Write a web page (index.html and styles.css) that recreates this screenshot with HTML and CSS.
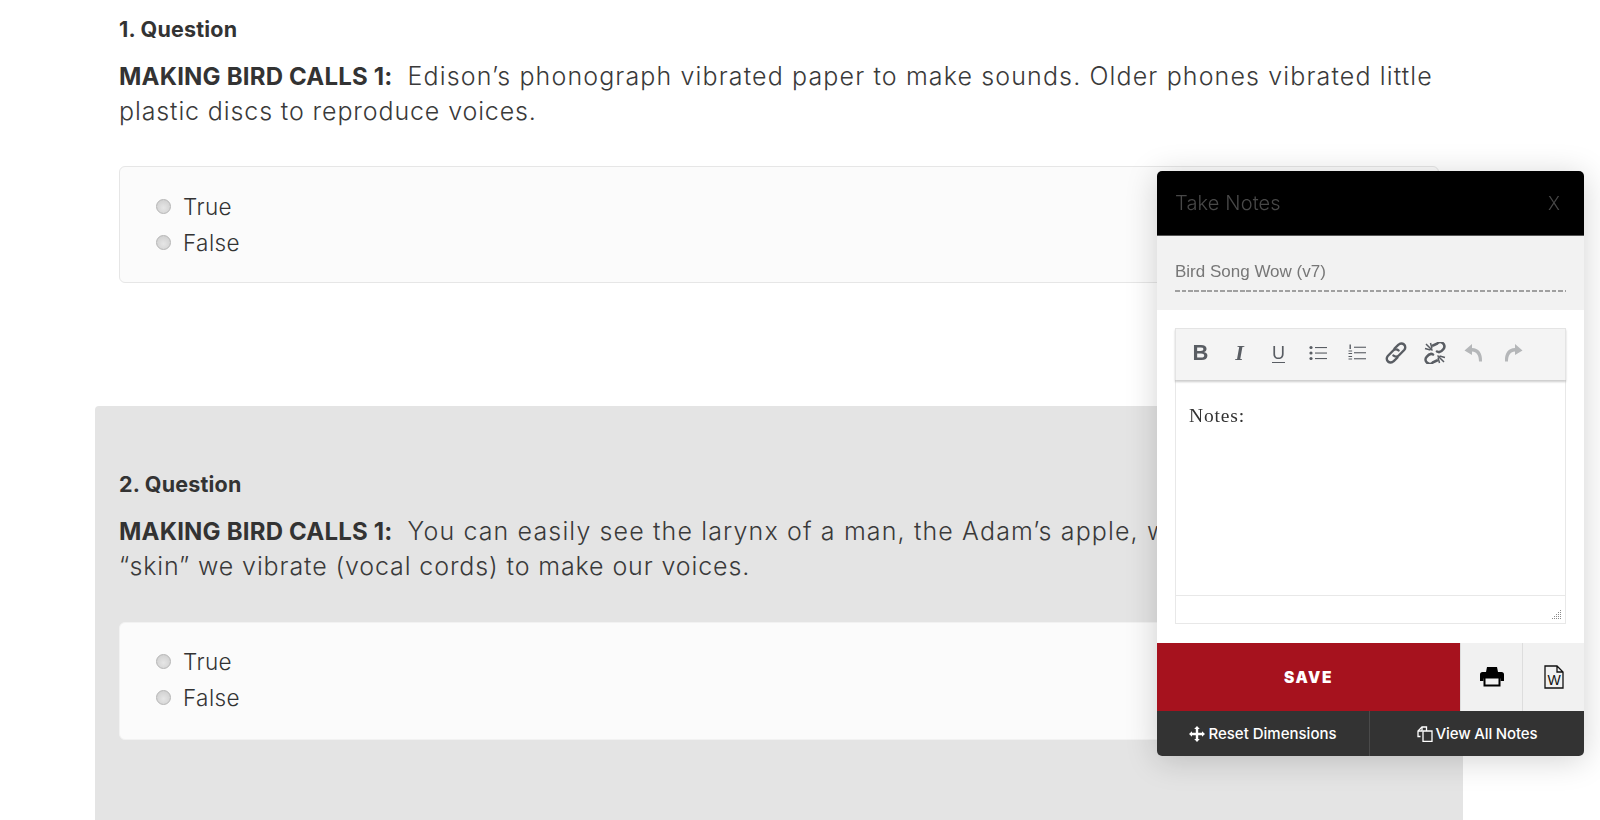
FILE: index.html
```html
<!DOCTYPE html>
<html lang="en">
<head>
<meta charset="utf-8">
<title>Take Notes</title>
<link rel="stylesheet" href="styles.css">
</head>
<body>
<main class="page">
  <section class="question first">
    <h3 class="q-title">1. Question</h3>
    <p class="q-text"><strong class="q-lead">MAKING BIRD CALLS 1:</strong><span class="q-body">Edison’s phonograph vibrated paper to make sounds. Older phones vibrated little<br><span class="q-wrap">plastic discs to reproduce voices.</span></span></p>
    <div class="answers">
      <label class="answer"><span class="radio"></span>True</label>
      <label class="answer"><span class="radio"></span>False</label>
    </div>
  </section>
  <section class="question active">
    <h3 class="q-title">2. Question</h3>
    <p class="q-text"><strong class="q-lead">MAKING BIRD CALLS 1:</strong><span class="q-body">You can easily see the larynx of a man, the Adam’s apple, which holds the<br><span class="q-wrap">“skin” we vibrate (vocal cords) to make our voices.</span></span></p>
    <div class="answers">
      <label class="answer"><span class="radio"></span>True</label>
      <label class="answer"><span class="radio"></span>False</label>
    </div>
  </section>
</main>

<aside class="notes">
  <header class="notes-head"><span>Take Notes</span><span class="notes-x">X</span></header>
  <div class="notes-name"><div class="notes-input">Bird Song Wow (v7)</div></div>
  <div class="notes-editor">
    <div class="toolbar">
      <span class="tool t-b">B</span>
      <span class="tool t-i">I</span>
      <span class="tool t-u">U</span>
      <span class="tool">
        <svg width="18" height="16" viewBox="0 0 18 16"><g fill="#595d63"><circle cx="2" cy="2.500" r="1.600"/><circle cx="2" cy="8" r="1.600"/><circle cx="2" cy="13.500" r="1.600"/><rect x="6" y="2" width="12" height="1.100"/><rect x="6" y="7.500" width="12" height="1.100"/><rect x="6" y="13" width="12" height="1.100"/></g></svg>
      </span>
      <span class="tool">
        <svg width="18" height="18" viewBox="0 0 18 18"><g fill="#595d63"><rect x="1.500" y="0.500" width="1.400" height="4.500"/><rect x="0.500" y="6.500" width="3.600" height="1"/><rect x="0.500" y="9" width="3.600" height="1"/><rect x="0.500" y="12" width="3.600" height="1"/><rect x="0.500" y="14.500" width="3.600" height="1"/><rect x="6" y="2.700" width="12" height="1.100"/><rect x="6" y="8.200" width="12" height="1.100"/><rect x="6" y="14.200" width="12" height="1.100"/></g></svg>
      </span>
      <span class="tool">
        <svg width="22" height="22" viewBox="0 0 22 22"><g fill="none" stroke="#595d63" stroke-width="2.400" stroke-linecap="round"><path d="M9.500 6.500 13.500 2.700a3.800 3.800 0 0 1 5.700 5.300L13.800 13.500a3.800 3.800 0 0 1-5.400 0"/><path d="M12.500 15.500 8.500 19.300a3.800 3.800 0 0 1-5.700-5.300L8.200 8.500a3.800 3.800 0 0 1 5.400 0"/></g></svg>
      </span>
      <span class="tool">
        <svg width="22" height="22" viewBox="0 0 22 22"><g fill="none" stroke="#595d63" stroke-width="2.600" stroke-linecap="round"><path d="M9 3.500 13 1.800a3.800 3.800 0 0 1 6.500 5.200C18 9 15.500 11 13 9.500"/><path d="M13 18.500 9 20.200a3.800 3.800 0 0 1-6.500-5.200C4 13 6.500 11 9 12.500"/></g><g stroke="#595d63" stroke-width="1.500"><path d="M2 2 8.500 8.500M6.500 1 8 6.500M1 6.500 6.500 8M20 20l-6.500-6.500M15.500 21 14 15.500M21 15.500 15.500 14"/></g></svg>
      </span>
      <span class="tool">
        <svg width="20" height="20" viewBox="0 0 20 20"><path fill="#b5b7b9" d="M8 1 0.500 7.500 8 12V8.500c4.500.3 7 3.500 7 10h3c.5-9-3.500-13-10-13.500z"/></svg>
      </span>
      <span class="tool">
        <svg width="20" height="20" viewBox="0 0 20 20"><path fill="#b5b7b9" d="M12 1l7.500 6.500L12 12V8.500c-4.500.3-7 3.500-7 10H2c-.5-9 3.500-13 10-13.500z"/></svg>
      </span>
    </div>
    <div class="editor-body">Notes:</div>
    <div class="editor-status">
      <svg class="grip" width="12" height="12" viewBox="0 0 12 12"><g fill="#8b8b8b"><rect x="10" y="1" width="1" height="1"/><rect x="10" y="3" width="1" height="1"/><rect x="8" y="3" width="1" height="1"/><rect x="10" y="5" width="1" height="1"/><rect x="8" y="5" width="1" height="1"/><rect x="6" y="5" width="1" height="1"/><rect x="10" y="7" width="1" height="1"/><rect x="8" y="7" width="1" height="1"/><rect x="6" y="7" width="1" height="1"/><rect x="4" y="7" width="1" height="1"/><rect x="10" y="9" width="1" height="1"/><rect x="8" y="9" width="1" height="1"/><rect x="6" y="9" width="1" height="1"/><rect x="4" y="9" width="1" height="1"/><rect x="2" y="9" width="1" height="1"/></g></svg>
    </div>
  </div>
  <div class="notes-actions">
    <button class="save">SAVE</button>
    <button class="action">
      <svg width="24" height="20" viewBox="0 0 24 20"><path fill="#000" d="M7 0h10l1 5h3.500A2.500 2.500 0 0 1 24 7.500V14h-3.500v-2.500h-17V14H0V7.500A2.500 2.500 0 0 1 2.500 5H6z"/><path fill="none" stroke="#000" stroke-width="2" d="M4.500 11v7.500h15V11"/></svg>
    </button>
    <button class="action">
      <svg width="20" height="24" viewBox="0 0 20 24"><path fill="none" stroke="#111" stroke-width="1.300" d="M1 1h12l6 6v16H1zM13 1v6h6"/><text class="word-w" x="10" y="20" text-anchor="middle">W</text></svg>
    </button>
  </div>
  <div class="notes-foot">
    <a class="foot-link">
      <svg width="16" height="16" viewBox="0 0 16 16"><path fill="#fff" d="M8 0l2.800 3H9.200v3.800H13V5.200L16 8l-3 2.800V9.200H9.200V13h1.600L8 16l-2.800-3h1.600V9.200H3v1.600L0 8l3-2.800v1.600h3.800V3H5.200z"/></svg>
      Reset Dimensions
    </a>
    <a class="foot-link">
      <svg width="16" height="16" viewBox="0 0 16 16"><g fill="none" stroke="#fff" stroke-width="1.300"><path d="M6 5h9v10.300H6z"/><path d="M3.500 10.500H1V5l4-4h4.500v4"/><path d="M5 1v4H1"/></g></svg>
      View All Notes
    </a>
  </div>
</aside>
</body>
</html>
```
FILE: styles.css
```css
* { box-sizing: border-box; }
html, body { margin: 0; height: 820px; overflow: hidden; background: #fff; }
body { font-family: Inter, "Open Sans", sans-serif; color: #3a3a3a; }

.page { width: 1368px; margin-left: 95px; }
.question { padding: 0 24px; }
.first { padding-top: 15px; height: 406px; }
.active { background: #e4e4e4; padding-top: 64px; height: 414px; border-radius: 4px 4px 0 0; }
.active .q-text { margin-bottom: 38px; }
.active .answers { border-color: #f2f2f2; height: 118px; padding-top: 20px; }

.q-title { margin: 0; font-size: 21.500px; line-height: 29px; font-weight: 700; color: #333; letter-spacing: 0.200px; }
.q-text { margin: 15px 0 37px; font-size: 25px; line-height: 35px; font-weight: 300; white-space: nowrap; }
.q-lead { font-size: 24px; font-weight: 700; color: #333; margin-right: 15px; letter-spacing: 0.200px; }
.q-body { letter-spacing: 1.130px; }
.q-wrap { letter-spacing: 0.880px; }

.answers { width: 1320px; height: 117px; padding: 21px 36px; background: #fbfbfb; border: 1px solid #e6e6e6; border-radius: 6px; }
.answer { display: flex; align-items: center; gap: 12px; height: 36.500px; font-size: 22.500px; font-weight: 300; letter-spacing: 0.400px; color: #333; }
.radio { width: 15px; height: 15px; border-radius: 50%; border: 1px solid #b5b5b5; background: radial-gradient(circle at 50% 60%, #e6e6e6, #cbcbcb); }

.notes { position: fixed; left: 1157px; top: 171px; width: 427px; height: 585px; display: flex; flex-direction: column; background: #fff; border-radius: 5px; box-shadow: 0 4px 32px rgba(0,0,0,.18); overflow: hidden; }
.notes-head { height: 65px; flex: none; padding: 0 24px 0 18px; display: flex; align-items: center; justify-content: space-between; background: #000; color: #484848; font-size: 20px; font-weight: 300; letter-spacing: 0.150px; border-bottom: 1px solid #555; }
.notes-x { font-size: 18px; }
.notes-name { height: 74px; flex: none; padding: 24px 18px 0; background: #f2f2f2; }
.notes-input { height: 32px; padding-bottom: 2px; background: repeating-linear-gradient(90deg, #a0a0a0 0 4.500px, transparent 4.500px 6.500px) left bottom / 100% 2.500px no-repeat; font: 17px/24px "Liberation Sans", Arial, sans-serif; color: #777; }
.notes-editor { flex: 1; padding: 18px 18px 19px; display: flex; flex-direction: column; }
.toolbar { height: 52px; flex: none; display: flex; align-items: center; padding: 0 5px 3px; background: #f4f4f4; border: 1px solid #e4e4e4; border-bottom: none; box-shadow: 0 2px 2px rgba(0,0,0,.2); position: relative; }
.tool { width: 39px; height: 38px; display: flex; align-items: center; justify-content: center; color: #595d63; }
.t-b { font: 700 22px "Liberation Sans", Arial, sans-serif; }
.t-i { font: italic 700 22px "Liberation Serif", serif; }
.t-u { font: 400 18px "Liberation Sans", Arial, sans-serif; text-decoration: underline; text-underline-offset: 3px; }
.editor-body { flex: 1; padding: 24px 13px; border-left: 1px solid #e8e8e8; border-right: 1px solid #e8e8e8; font: 19.500px/24px "Liberation Serif", serif; letter-spacing: 0.850px; color: #333; }
.editor-status { height: 29px; flex: none; border: 1px solid #e8e8e8; display: flex; justify-content: flex-end; align-items: flex-end; padding: 0 3px 2px 0; }
.notes-actions { height: 68px; flex: none; display: flex; }
.save { width: 303px; border: 0; background: #a6121e; color: #fff; font: 900 15.500px Inter, sans-serif; letter-spacing: 1.600px; }
.action { flex: 1; border: 0; border-left: 1px solid #ddd; background: #f1f1f1; display: flex; align-items: center; justify-content: center; padding: 0; }
.word-w { font: 400 14px "Liberation Sans", sans-serif; fill: #111; }
.notes-foot { height: 45px; flex: none; display: flex; background: #333; color: #fff; font-size: 15px; font-weight: 500; letter-spacing: 0; }
.foot-link { flex: 1; display: flex; align-items: center; justify-content: center; gap: 3px; }
.foot-link:first-child { flex: none; width: 212px; }
.foot-link + .foot-link { border-left: 1px solid #4a4a4a; letter-spacing: -0.150px; }
```
